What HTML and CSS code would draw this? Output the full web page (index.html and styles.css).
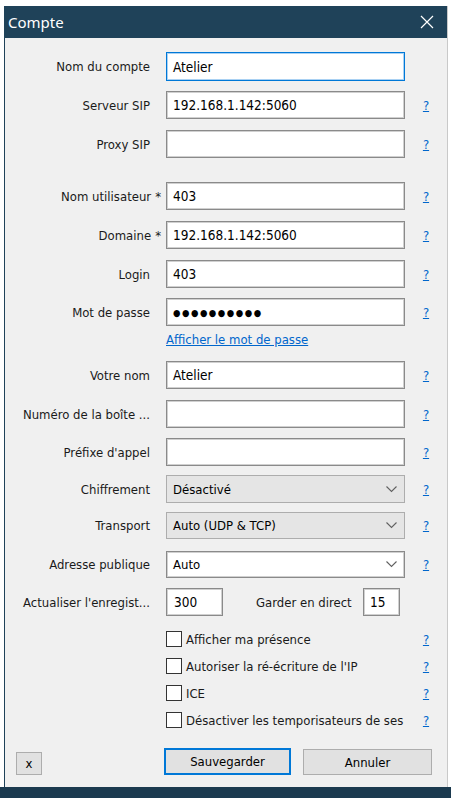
FILE: index.html
```html
<!DOCTYPE html>
<html lang="fr">
<head>
<meta charset="utf-8">
<title>Compte</title>
<link rel="stylesheet" href="styles.css">
</head>
<body>
<div class="window">
  <div class="titlebar">
    <span class="title">Compte</span>
    <svg class="close" width="14" height="14" viewBox="0 0 14 14"><path d="M1 1 L13 13 M13 1 L1 13" stroke="#fff" stroke-width="1.2" fill="none"/></svg>
  </div>
  <div class="content">
    <div class="row r1"><label>Nom du compte</label><div class="field focus">Atelier</div><span></span></div>
    <div class="row r2"><label>Serveur SIP</label><div class="field">192.168.1.142:5060</div><a class="help">?</a></div>
    <div class="row r3"><label>Proxy SIP</label><div class="field"></div><a class="help">?</a></div>
    <div class="row r4"><label>Nom utilisateur<span class="req">*</span></label><div class="field">403</div><a class="help">?</a></div>
    <div class="row r5"><label>Domaine<span class="req">*</span></label><div class="field">192.168.1.142:5060</div><a class="help">?</a></div>
    <div class="row r6"><label>Login</label><div class="field">403</div><a class="help">?</a></div>
    <div class="row r7"><label>Mot de passe</label><div class="field pw">●●●●●●●●●●</div><a class="help">?</a></div>
    <div class="row linkrow"><span></span><a class="showpw">Afficher le mot de passe</a><span></span></div>
    <div class="row r9"><label>Votre nom</label><div class="field">Atelier</div><a class="help">?</a></div>
    <div class="row r10"><label>Numéro de la boîte ...</label><div class="field"></div><a class="help">?</a></div>
    <div class="row r11"><label>Préfixe d'appel</label><div class="field"></div><a class="help">?</a></div>
    <div class="row r12 sel"><label>Chiffrement</label><div class="field select gray"><span>Désactivé</span><svg class="chev" width="11" height="7" viewBox="0 0 11 7"><path d="M0.5 0.5 L5.5 5.5 L10.5 0.5" stroke="#606060" stroke-width="1.1" fill="none"/></svg></div><a class="help">?</a></div>
    <div class="row r13 sel"><label>Transport</label><div class="field select gray"><span>Auto (UDP &amp; TCP)</span><svg class="chev" width="11" height="7" viewBox="0 0 11 7"><path d="M0.5 0.5 L5.5 5.5 L10.5 0.5" stroke="#606060" stroke-width="1.1" fill="none"/></svg></div><a class="help">?</a></div>
    <div class="row r14 sel"><label>Adresse publique</label><div class="field select"><span>Auto</span><svg class="chev" width="11" height="7" viewBox="0 0 11 7"><path d="M0.5 0.5 L5.5 5.5 L10.5 0.5" stroke="#606060" stroke-width="1.1" fill="none"/></svg></div><a class="help">?</a></div>
    <div class="row r15"><label>Actualiser l'enregist...</label>
      <div class="split"><div class="field small">300</div><span class="keep">Garder en direct</span><div class="field tiny">15</div></div><span></span></div>
    <div class="checks">
      <div class="row check"><span></span><div class="cb"><span class="box"></span><span>Afficher ma présence</span></div><a class="help">?</a></div>
      <div class="row check"><span></span><div class="cb"><span class="box"></span><span>Autoriser la ré-écriture de l'IP</span></div><a class="help">?</a></div>
      <div class="row check"><span></span><div class="cb"><span class="box"></span><span>ICE</span></div><a class="help">?</a></div>
      <div class="row check"><span></span><div class="cb"><span class="box"></span><span>Désactiver les temporisateurs de ses</span></div><a class="help">?</a></div>
    </div>
    <div class="buttons">
      <button class="btn xbtn">x</button>
      <button class="btn save">Sauvegarder</button>
      <button class="btn cancel">Annuler</button>
    </div>
  </div>
</div>
<div class="taskbar"></div>
</body>
</html>
```

FILE: styles.css
```css
* { box-sizing: border-box; }
html, body { margin: 0; padding: 0; background: #ffffff; }
body {
  width: 451px;
  height: 798px;
  overflow: hidden;
  font-family: "DejaVu Sans Condensed", "DejaVu Sans", sans-serif;
  font-size: 13px;
  color: #1a1a1a;
}
.window {
  margin: 6px 0 0 4px;
  width: 444px;
  height: 781px;
  background: #f0f0f0;
  border-left: 1px solid #1f4259;
  border-right: 1px solid #c9c9c9;
}
.titlebar {
  height: 32px;
  background: #1f4259;
  display: flex;
  align-items: center;
  justify-content: space-between;
  padding: 0 13px 0 4px;
  margin-left: -1px;
}
.title {
  font-family: "Noto Sans", sans-serif;
  font-size: 15px;
  color: #fff;
}
.close { display: block; }
.content {
  padding: 14px 0 0 11px;
}
.row {
  display: grid;
  grid-template-columns: 134px 239px 1fr;
  column-gap: 16px;
  align-items: center;
  height: 28px;
}
.row label {
  text-align: right;
  white-space: nowrap;
}
.req { margin-left: 4px; margin-right: -11px; }
.r1 { height: 29px; }
.r2, .r3, .r5, .r6, .r10 { margin-top: 11px; }
.r2 { margin-top: 10px; }
.r4 { margin-top: 24px; }
.r7 { margin-top: 10px; }
.linkrow { height: 18px; margin-top: 4px; }
.r9 { margin-top: 13px; }
.r11 { margin-top: 10px; }
.r12 { margin-top: 9px; }
.r13 { margin-top: 9px; height: 27px; }
.r14 { margin-top: 12px; height: 27px; }
.r15 { margin-top: 10px; }
.field {
  height: 100%;
  background: #fff;
  border: 1px solid #8a8a8a;
  box-shadow: inset 0 0 0 1px #d0d0d0;
  padding: 0 6px;
  display: flex;
  align-items: center;
  white-space: nowrap;
  overflow: hidden;
  font-size: 13.5px;
  color: #000;
}
.field.focus {
  border-color: #0078d7;
  box-shadow: inset 0 0 0 1px #a9d1f3;
}
.field.pw { font-size: 9.5px; letter-spacing: 1.5px; padding-left: 6px; }
.field.select { justify-content: space-between; padding-right: 7px; font-size: 13px; }
.field.gray { background: #e5e5e5; border-color: #adadad; box-shadow: none; }
.chev { display: block; }
.help {
  color: #0066cc;
  text-decoration: underline;
  font-size: 13px;
  width: 10px;
  text-align: center;
}
.showpw {
  color: #0066cc;
  text-decoration: underline;
  white-space: nowrap;
}
.split {
  display: flex;
  align-items: center;
  height: 100%;
}
.field.small { width: 57px; flex: none; padding-left: 7px; }
.keep { margin-left: 33px; width: 98px; white-space: nowrap; }
.field.tiny { width: 37px; flex: none; margin-left: 9px; padding-left: 6px; }
.checks { margin-top: 15px; }
.row.check { height: 16px; margin-bottom: 11px; }
.cb {
  display: flex;
  align-items: center;
  white-space: nowrap;
  height: 16px;
}
.box {
  width: 16px;
  height: 16px;
  border: 1px solid #333;
  background: #fff;
  margin-right: 4px;
  flex: none;
}
.buttons {
  display: flex;
  align-items: flex-end;
  margin-top: 20px;
  height: 27px;
}
.btn {
  font-family: "DejaVu Sans Condensed", "DejaVu Sans", sans-serif;
  font-size: 13px;
  color: #000;
  background: #e1e1e1;
  border: 1px solid #adadad;
  padding: 0;
  margin: 0;
}
.xbtn { width: 26px; height: 23px; margin-bottom: 0; }
.save { width: 127px; height: 27px; margin-left: 122px; border: 2px solid #0078d7; }
.cancel { width: 129px; height: 26px; margin-left: 12px; }
.taskbar {
  height: 11px;
  background: #1b3a4f;
}
```
